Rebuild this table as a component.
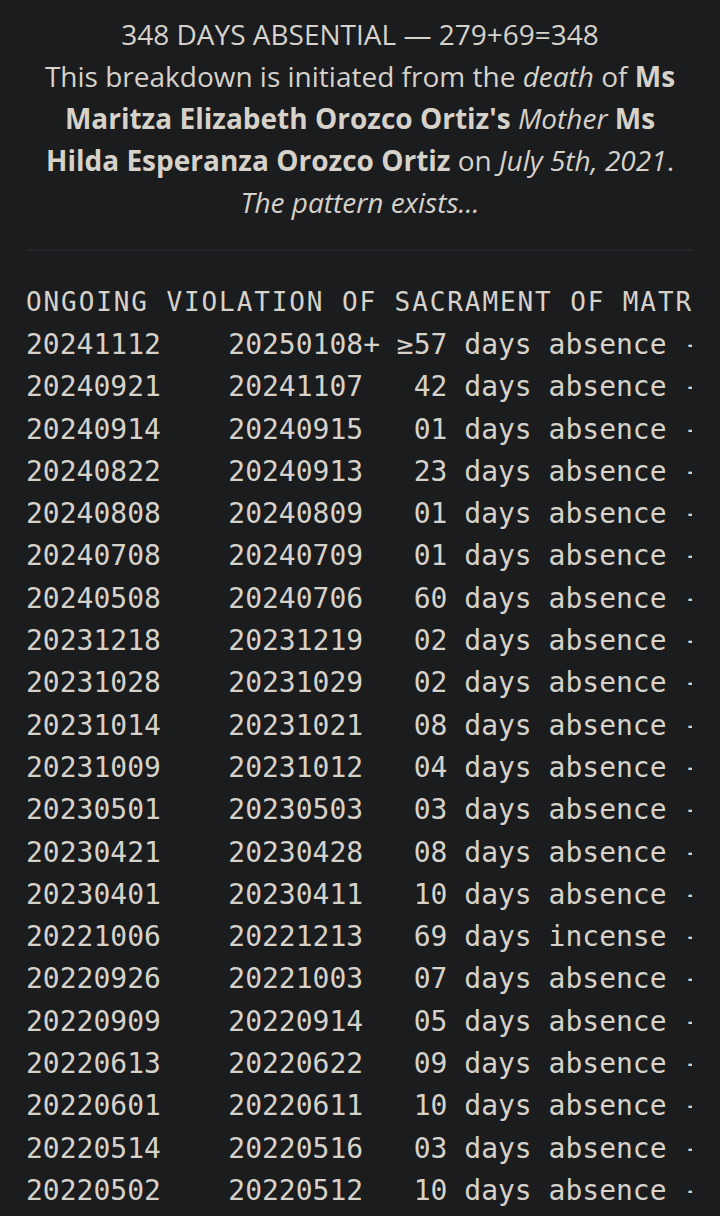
import React from "react";

const rows: [string, string, string, string][] = [
  ["20241112", "20250108+", "≥57", "absence"],
  ["20240921", "20241107 ", " 42", "absence"],
  ["20240914", "20240915 ", " 01", "absence"],
  ["20240822", "20240913 ", " 23", "absence"],
  ["20240808", "20240809 ", " 01", "absence"],
  ["20240708", "20240709 ", " 01", "absence"],
  ["20240508", "20240706 ", " 60", "absence"],
  ["20231218", "20231219 ", " 02", "absence"],
  ["20231028", "20231029 ", " 02", "absence"],
  ["20231014", "20231021 ", " 08", "absence"],
  ["20231009", "20231012 ", " 04", "absence"],
  ["20230501", "20230503 ", " 03", "absence"],
  ["20230421", "20230428 ", " 08", "absence"],
  ["20230401", "20230411 ", " 10", "absence"],
  ["20221006", "20221213 ", " 69", "incense"],
  ["20220926", "20221003 ", " 07", "absence"],
  ["20220909", "20220914 ", " 05", "absence"],
  ["20220613", "20220622 ", " 09", "absence"],
  ["20220601", "20220611 ", " 10", "absence"],
  ["20220514", "20220516 ", " 03", "absence"],
  ["20220502", "20220512 ", " 10", "absence"],
];

export default function App() {
  return (
    <div className="w-[720px] h-[1216px] overflow-hidden bg-[#1b1c1e] text-[#d6d2ca]">
      <div
        className="pt-[13px] text-center text-[28px] leading-[42px]"
        style={{ fontFamily: '"Open Sans", "Noto Sans", sans-serif' }}
      >
        <div>348 DAYS ABSENTIAL — 279+69=348</div>
        <div>
          This breakdown is initiated from the <i>death</i> of <b>Ms</b>
        </div>
        <div>
          <b>Maritza Elizabeth Orozco Ortiz's</b> <i>Mother</i> <b>Ms</b>
        </div>
        <div>
          <b>Hilda Esperanza Orozco Ortiz</b> on <i>July 5th, 2021</i>.
        </div>
        <div>
          <i>The pattern exists...</i>
        </div>
      </div>
      <div className="mx-[26px] mt-[26px] h-[2px] bg-[#232427]" />
      <div
        className="ml-[26px] mt-[30px] w-[666px] overflow-hidden whitespace-pre"
        style={{ fontFamily: '"DejaVu Sans Mono", "Liberation Mono", monospace' }}
      >
        <div className="text-[26px] leading-[43px] tracking-[1.9px]">
          ONGOING VIOLATION OF SACRAMENT OF MATRIMONY
        </div>
        {rows.map((r, i) => (
          <div key={i} className="text-[28px] leading-[42.3px]">
            {`${r[0]}    ${r[1]} ${r[2]} days ${r[3]} - ✝`}
          </div>
        ))}
      </div>
    </div>
  );
}
